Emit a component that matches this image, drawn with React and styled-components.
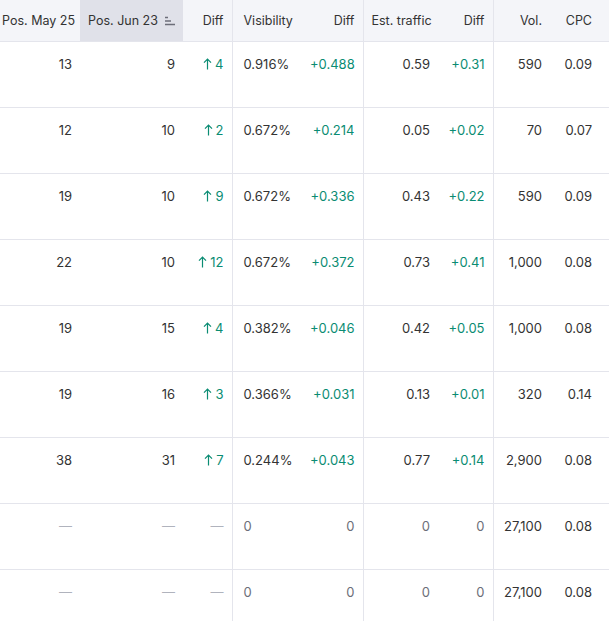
import React from "react";
import styled, { createGlobalStyle } from "styled-components";

const G = createGlobalStyle`
  body{margin:0;background:#fff;font-family:Inter,"Noto Sans",sans-serif;}
`;
const Table = styled.table`
  border-collapse:collapse;table-layout:fixed;width:609px;
  font-size:13px;color:#333;
`;
const Th = styled.th`
  height:41px;box-sizing:border-box;padding:0 ${p=>p.$pr ?? 8}px 0 ${p=>p.$pl ?? 8}px;
  background:${p=>p.$active?"#e0e1e9":"#f4f5f9"};
  font-weight:400;font-size:12.5px;color:#333;white-space:nowrap;
  text-align:${p=>p.$left?"left":"right"};
  border-bottom:1px solid #e4e5ec;
  border-right:${p=>p.$sep?"1px solid #e4e5ec":"none"};
`;
const Td = styled.td`
  height:51px;vertical-align:top;padding:14px ${p=>p.$pr ?? 8}px 0 ${p=>p.$pl ?? 8}px;
  text-align:${p=>p.$left?"left":"right"};white-space:nowrap;
  border-bottom:1px solid #e4e5ec;line-height:17px;
  border-right:${p=>p.$sep?"1px solid #e4e5ec":"none"};
  color:${p=>p.$green?"#0a8c73":p.$muted?"#6c6e79":"#333"};
`;
const Dash = styled.span`color:#b0b3bd;`;
const Up = ()=>(
  <svg width="9" height="12" viewBox="0 0 9 12" style={{marginRight:3,verticalAlign:"-1px"}}>
    <path d="M4.5 11.5V1.2M1 4.6L4.5 1.1L8 4.6" fill="none" stroke="#0a8c73" strokeWidth="1.2"/>
  </svg>
);
const Sort = ()=>(
  <svg width="12" height="10" viewBox="0 0 12 10" style={{marginLeft:6,verticalAlign:"-1px"}}>
    <path d="M1 1.5h3M1 5h6M1 8.5h10" stroke="#6c6e79" strokeWidth="1.3"/>
  </svg>
);
const rows=[
  [13,9,4,"0.916%","+0.488","0.59","+0.31","590","0.09"],
  [12,10,2,"0.672%","+0.214","0.05","+0.02","70","0.07"],
  [19,10,9,"0.672%","+0.336","0.43","+0.22","590","0.09"],
  [22,10,12,"0.672%","+0.372","0.73","+0.41","1,000","0.08"],
  [19,15,4,"0.382%","+0.046","0.42","+0.05","1,000","0.08"],
  [19,16,3,"0.366%","+0.031","0.13","+0.01","320","0.14"],
  [38,31,7,"0.244%","+0.043","0.77","+0.14","2,900","0.08"],
  [null,null,null,"0","0","0","0","27,100","0.08"],
  [null,null,null,"0","0","0","0","27,100","0.08"],
];
export default function App(){
  return(<><G/>
  <Table>
    <colgroup>
      {[80,103,49,70,61,77,53,57,59].map((w,i)=><col key={i} style={{width:w}}/>)}
    </colgroup>
    <thead><tr>
      <Th $pl={2}>Pos. May 25</Th>
      <Th $active $pr={12}>Pos. Jun 23<Sort/></Th>
      <Th $sep>Diff</Th>
      <Th $left $pl={11}>Visibility</Th>
      <Th $sep>Diff</Th>
      <Th $left>Est. traffic</Th>
      <Th $sep>Diff</Th>
      <Th>Vol.</Th>
      <Th $pr={17}>CPC</Th>
    </tr></thead>
    <tbody>
      {rows.map((r,i)=>{const e=r[0]===null;return(
        <tr key={i}>
          <Td>{e?<Dash>—</Dash>:r[0]}</Td>
          <Td $pr={8}>{e?<Dash>—</Dash>:r[1]}</Td>
          <Td $sep $green>{e?<Dash>—</Dash>:<><Up/>{r[2]}</>}</Td>
          <Td $left $pl={11} $muted={e}>{r[3]}</Td>
          <Td $sep $green={!e} $muted={e}>{r[4]}</Td>
          <Td $pr={10} $muted={e}>{r[5]}</Td>
          <Td $sep $green={!e} $muted={e}>{r[6]}</Td>
          <Td $pl={0}>{r[7]}</Td>
          <Td $pr={17}>{r[8]}</Td>
        </tr>)})}
    </tbody>
  </Table></>);
}
